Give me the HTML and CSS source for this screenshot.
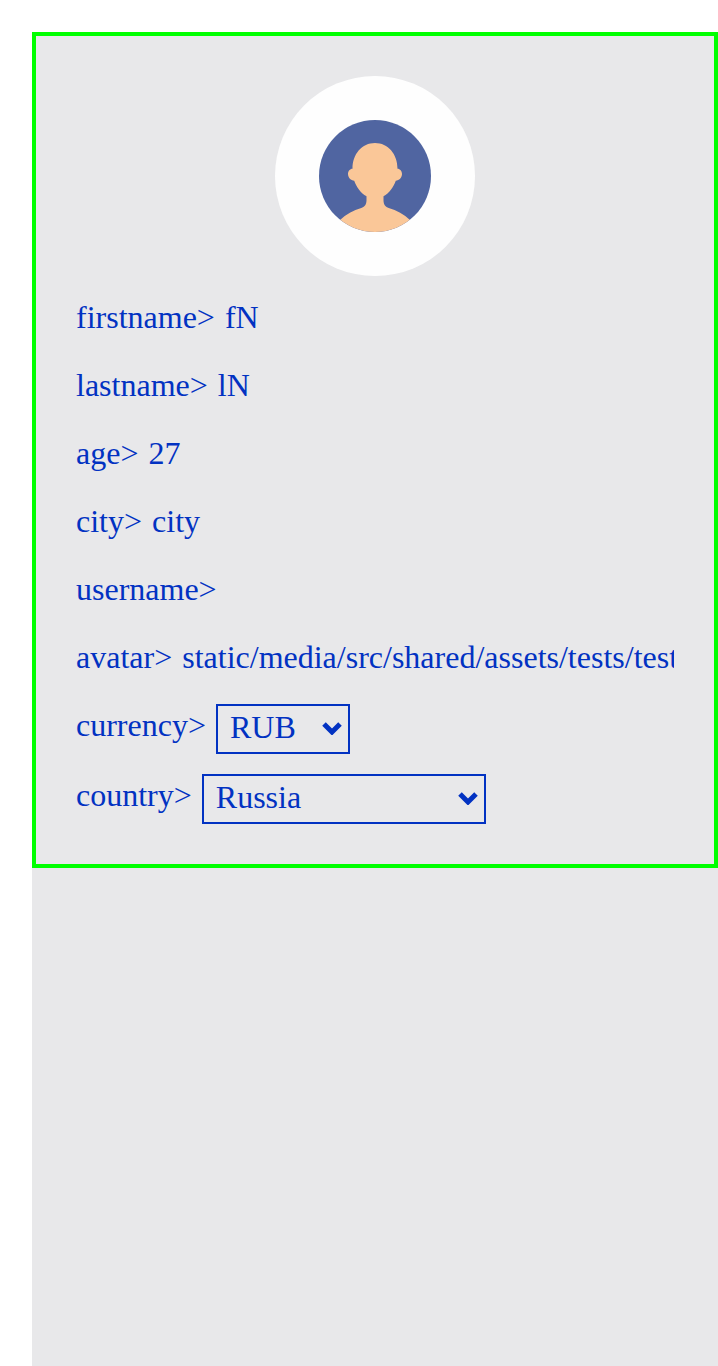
FILE: index.html
```html
<!DOCTYPE html>
<html lang="en">
<head>
<meta charset="utf-8">
<meta name="viewport" content="width=device-width, initial-scale=1">
<title>Profile</title>
<link rel="stylesheet" href="styles.css">
</head>
<body>
<main class="page">
  <form class="profile">
    <div class="avatar">
      <svg class="avatar-image" viewBox="0 0 200 200" role="img" aria-label="User avatar">
        <defs><clipPath id="disc"><circle cx="100" cy="100" r="56"/></clipPath></defs>
        <g clip-path="url(#disc)">
          <path fill="#5065a1" d="M40 40h120v120H40z"/>
          <path fill="#fac798" d="M100 67c-13 0-22.500 11-22.500 25.700c-2.500 0-4.500 2.300-4.500 5.300c0 3.800 3 6.500 6.200 6.700c2.500 6.500 6.500 12.500 12.300 15.500v4c0 4.500-2.200 6.800-5.200 7.800c-8 2.200-15.300 6.500-21.300 12V160h70v-16c-6-5.500-13.300-9.800-21.300-12c-3-1-5.200-3.300-5.200-7.800v-4c5.800-3 9.800-9 12.300-15.500c3.200-.2 6.200-2.900 6.200-6.700c0-3-2-5.300-4.500-5.300C122.500 78 113 67 100 67Z"/>
        </g>
      </svg>
    </div>
    <div class="row"><label class="label" for="firstname">firstname&gt;</label><input class="value" id="firstname" type="text" value="fN" readonly></div>
    <div class="row"><label class="label" for="lastname">lastname&gt;</label><input class="value" id="lastname" type="text" value="lN" readonly></div>
    <div class="row"><label class="label" for="age">age&gt;</label><input class="value" id="age" type="text" value="27" readonly></div>
    <div class="row"><label class="label" for="city">city&gt;</label><input class="value" id="city" type="text" value="city" readonly></div>
    <div class="row"><label class="label" for="username">username&gt;</label><input class="value" id="username" type="text" value="" readonly></div>
    <div class="row"><label class="label" for="avatar">avatar&gt;</label><input class="value" id="avatar" type="text" value="static/media/src/shared/assets/tests/test" readonly></div>
    <div class="row">
      <label class="label" for="currency">currency&gt;</label>
      <div class="picker">
        <select class="select select-currency" id="currency"><option>RUB</option></select>
        <svg class="chevron" viewBox="0 0 20 14" aria-hidden="true"><path d="M2 3l8 8 8-8"/></svg>
      </div>
    </div>
    <div class="row">
      <label class="label" for="country">country&gt;</label>
      <div class="picker">
        <select class="select select-country" id="country"><option>Russia</option></select>
        <svg class="chevron" viewBox="0 0 20 14" aria-hidden="true"><path d="M2 3l8 8 8-8"/></svg>
      </div>
    </div>
  </form>
</main>
</body>
</html>
```
FILE: styles.css
```css
* {
  box-sizing: border-box;
}

body {
  margin: 0;
  background: #fff;
  color: #0232c2;
  font: 32px/42px "Liberation Serif", "Times New Roman", serif;
}

.page {
  min-height: calc(100vh - 32px);
  margin: 32px 0 0 32px;
  background: #e8e8ea;
}

.profile {
  display: flex;
  flex-direction: column;
  gap: 20px;
  padding: 40px;
  border: 4px solid #0f0;
}

.avatar {
  align-self: center;
  width: 200px;
  height: 200px;
  overflow: hidden;
  border-radius: 50%;
  background: #fefefe;
}

.avatar-image {
  display: block;
  width: 100%;
}

.row {
  display: flex;
  align-items: flex-start;
  gap: 10px;
  min-height: 48px;
}

.value {
  flex: 1;
  min-width: 0;
  height: 42px;
  padding: 0;
  border: 0;
  outline: 0;
  background: transparent;
  color: inherit;
  font: inherit;
}

.picker {
  position: relative;
}

.select {
  display: block;
  height: 50px;
  padding: 0 36px 4px 12px;
  border: 2px solid #0232c2;
  border-radius: 0;
  appearance: none;
  background: transparent;
  color: inherit;
  font: inherit;
}

.select-currency {
  width: 134px;
}

.select-country {
  width: 284px;
}

.chevron {
  position: absolute;
  top: 17px;
  right: 8px;
  width: 20px;
  height: 14px;
  fill: none;
  stroke: #0232c2;
  stroke-width: 5;
  pointer-events: none;
}
```
